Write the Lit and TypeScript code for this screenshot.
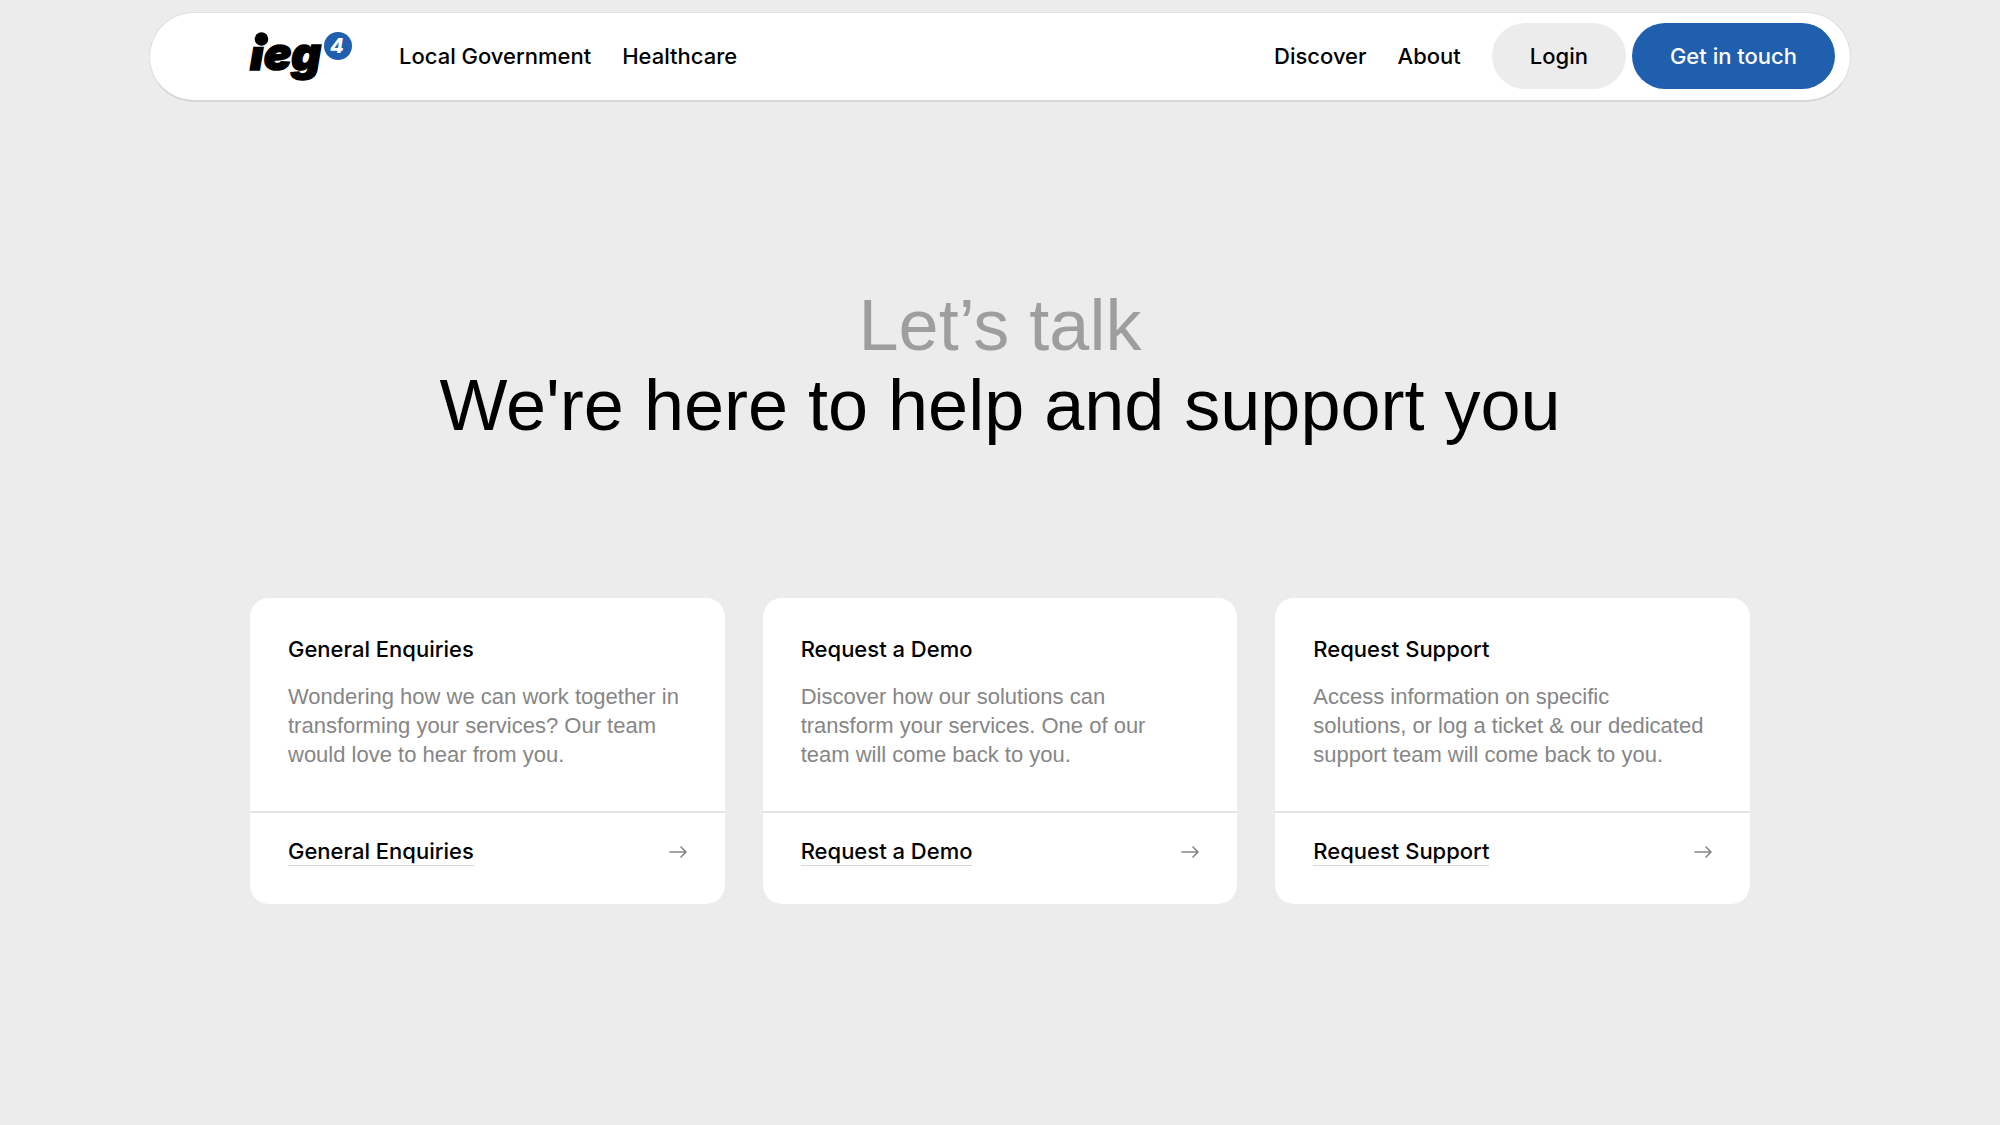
import { LitElement, html, css } from "lit";
import { customElement, property } from "lit/decorators.js";

@customElement("brand-logo")
export class BrandLogo extends LitElement {
  static styles = css`
    :host {
      display: block;
    }
    .logo {
      display: block;
      width: 104px;
      height: 56px;
      overflow: visible;
    }
    .word {
      font: italic 900 46px Inter, "Liberation Sans", sans-serif;
      fill: #000;
      stroke: #000;
      stroke-width: 1.6;
    }
    .disc {
      fill: #205eae;
    }
    .four {
      font: italic 800 20px Inter, "Liberation Sans", sans-serif;
      fill: #fff;
    }
  `;

  render() {
    return html`
      <svg class="logo" viewBox="0 0 104 56" role="img" aria-label="ieg4">
        <clipPath id="below-dot">
          <path d="M-4 18.8H17V10H80V60H-4Z"></path>
        </clipPath>
        <g clip-path="url(#below-dot)">
          <text class="word" x="0" y="42">ieg</text>
        </g>
        <circle cx="11.5" cy="11" r="6.8"></circle>
        <circle class="disc" cx="88" cy="18" r="14"></circle>
        <text class="four" x="87" y="25" text-anchor="middle">4</text>
      </svg>
    `;
  }
}

@customElement("site-header")
export class SiteHeader extends LitElement {
  static styles = css`
    :host {
      display: block;
    }
    .bar {
      box-sizing: border-box;
      display: flex;
      align-items: center;
      justify-content: space-between;
      width: calc(85% + 2px);
      margin: 0 auto;
      padding: 10px 15px 11px 100px;
      background: #fff;
      border: 1px solid #e0e0e0;
      border-bottom: 2px solid #d6d6d6;
      border-radius: 45px;
    }
    .group {
      display: flex;
      align-items: center;
      gap: 31px;
    }
    .home {
      margin-right: 14px;
    }
    .actions {
      display: flex;
      gap: 6px;
    }
    .link,
    .pill {
      color: #000;
      font-size: 22px;
      font-weight: 500;
      line-height: 28px;
      text-decoration: none;
      white-space: nowrap;
    }
    .pill {
      padding: 19px 38px;
      border-radius: 33px;
      background: #ececec;
    }
    .primary {
      background: #205eae;
      color: #fff;
    }
  `;

  render() {
    return html`
      <header class="bar">
        <nav class="group" aria-label="Sectors">
          <a class="home" href="#home"><brand-logo></brand-logo></a>
          <a class="link" href="#local-government">Local Government</a>
          <a class="link" href="#healthcare">Healthcare</a>
        </nav>
        <nav class="group" aria-label="Company">
          <a class="link" href="#discover">Discover</a>
          <a class="link" href="#about">About</a>
          <div class="actions">
            <a class="pill" href="#login">Login</a>
            <a class="pill primary" href="#contact">Get in touch</a>
          </div>
        </nav>
      </header>
    `;
  }
}

@customElement("contact-card")
export class ContactCard extends LitElement {
  @property() heading = "";
  @property() text = "";
  @property() href = "#";

  static styles = css`
    :host {
      display: block;
    }
    .card {
      display: flex;
      flex-direction: column;
      height: 100%;
      background: #fff;
      border-radius: 19px;
      font-size: 22px;
    }
    .body {
      flex: 1;
      padding: 37px 44px 42px 38px;
    }
    .title {
      margin: 0 0 19px;
      font-size: 22px;
      font-weight: 500;
      line-height: 28px;
    }
    .text {
      margin: 0;
      color: #868686;
      font-family: "Liberation Sans", Arial, sans-serif;
      line-height: 29px;
    }
    .foot {
      display: flex;
      align-items: center;
      justify-content: space-between;
      padding: 24px 38px;
      padding-bottom: 38px;
      border-top: 2px solid #e4e4e4;
    }
    .link {
      color: #000;
      font-weight: 500;
      line-height: 28px;
      text-decoration: none;
      border-bottom: 1px solid #d6d6d6;
    }
    .arrow {
      width: 18px;
      height: 12px;
      fill: none;
      stroke: #868686;
      stroke-width: 1.6;
      stroke-linecap: round;
      stroke-linejoin: round;
    }
  `;

  render() {
    return html`
      <article class="card">
        <div class="body">
          <h2 class="title">${this.heading}</h2>
          <p class="text">${this.text}</p>
        </div>
        <div class="foot">
          <a class="link" href=${this.href}>${this.heading}</a>
          <svg class="arrow" viewBox="0 0 18 12" aria-hidden="true">
            <path d="M1 6H17M12 1L17 6L12 11"></path>
          </svg>
        </div>
      </article>
    `;
  }
}

const CARDS = [
  {
    heading: "General Enquiries",
    text: "Wondering how we can work together in transforming your services? Our team would love to hear from you.",
    href: "#general-enquiries",
  },
  {
    heading: "Request a Demo",
    text: "Discover how our solutions can transform your services. One of our team will come back to you.",
    href: "#request-demo",
  },
  {
    heading: "Request Support",
    text: "Access information on specific solutions, or log a ticket & our dedicated support team will come back to you.",
    href: "#request-support",
  },
];

@customElement("app-root")
export class AppRoot extends LitElement {
  static styles = css`
    :host {
      display: block;
      box-sizing: border-box;
      min-height: 100vh;
      padding: 12px 0 64px;
      background: #ececec;
      color: #000;
      font-family: Inter, "Liberation Sans", sans-serif;
    }
    .main {
      width: 75%;
      margin: 0 auto;
    }
    .hero {
      margin: 0;
      padding: 183px 0 153px;
      font-family: "Liberation Sans", Arial, sans-serif;
      font-size: 72px;
      font-weight: 400;
      line-height: 80px;
      text-align: center;
    }
    .lead {
      display: block;
      color: #9e9e9e;
    }
    .cards {
      display: grid;
      grid-template-columns: repeat(3, 1fr);
      gap: 38px;
    }
  `;

  render() {
    return html`
      <site-header></site-header>
      <main class="main">
        <h1 class="hero">
          <span class="lead">Let’s talk</span>
          We're here to help and support you
        </h1>
        <section class="cards">
          ${CARDS.map(
            (c) => html`<contact-card .heading=${c.heading} .text=${c.text} .href=${c.href}></contact-card>`
          )}
        </section>
      </main>
    `;
  }
}
